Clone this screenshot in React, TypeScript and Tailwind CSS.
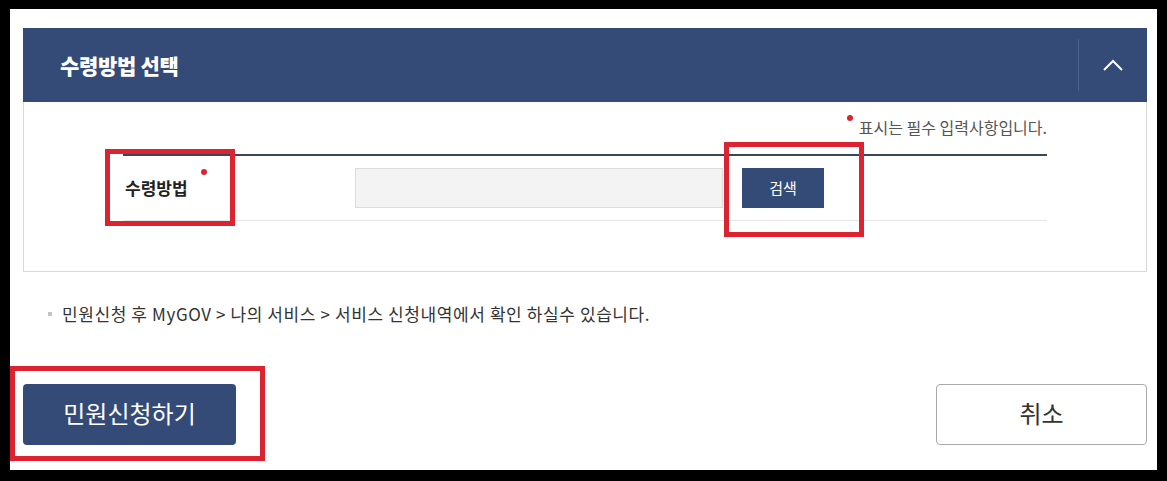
import React from "react";

const font = { fontFamily: '"Noto Sans CJK KR", "Noto Sans", sans-serif' };

export default function App() {
  return (
    <div
      className="w-[1167px] h-[481px] bg-black pt-[9px] pl-[10px] pr-[10px] pb-[11px]"
      style={font}
    >
      <div className="relative h-full bg-white pl-[13px] pr-[10px] pt-[19px]">
        {/* Header */}
        <div className="flex h-[74px] items-center bg-[#344b77]">
          <h2 className="pl-[37px] text-[21px] font-extrabold leading-none tracking-[-0.3px] text-white">
            수령방법 선택
          </h2>
          <div className="ml-auto h-[52px] w-px bg-[#4a6190]" />
          <div className="flex w-[68px] items-center justify-center">
            <svg width="20" height="12" viewBox="0 0 20 12" fill="none">
              <path d="M1 11 L10 2 L19 11" stroke="white" strokeWidth="2" />
            </svg>
          </div>
        </div>

        {/* Body */}
        <div className="h-[170px] border border-t-0 border-[#d9d9d9] px-[99px] pt-[15px]">
          <div className="flex h-[20px] items-start justify-end">
            <span className="mt-[-2px] mr-[6px] h-[6px] w-[6px] rounded-full bg-[#d9262c]" />
            <span className="text-[16px] leading-[20px] text-[#555]">
              표시는 필수 입력사항입니다.
            </span>
          </div>
          <div className="mt-[17px] flex h-[67px] items-center border-t-2 border-b border-t-[#3b4656] border-b-[#e6e6e6] pl-[2px]">
            <div className="relative w-[230px]">
              <span className="text-[17px] font-bold leading-none text-[#222]">
                수령방법
              </span>
              <span className="absolute left-[76px] top-[-7px] h-[6px] w-[6px] rounded-full bg-[#d9262c]" />
            </div>
            <div className="h-[40px] w-[368px] border border-[#dcdcdc] bg-[#f3f3f3]" />
            <button className="ml-[19px] h-[40px] w-[82px] bg-[#344b77] text-[15px] text-white">
              검색
            </button>
          </div>
        </div>

        {/* Note */}
        <div className="mt-[30px] flex items-center pl-[25px]">
          <span className="h-[4px] w-[4px] bg-[#c4c4c4]" />
          <p className="ml-[10px] text-[17px] leading-[24px] tracking-[0.6px] text-[#333]">
            민원신청 후 MyGOV &gt; 나의 서비스 &gt; 서비스 신청내역에서 확인 하실수 있습니다.
          </p>
        </div>

        {/* Buttons */}
        <div className="mt-[58px] flex justify-between">
          <button className="h-[61px] w-[213px] rounded-[4px] bg-[#344b77] pb-[3px] text-[24px] text-white">
            민원신청하기
          </button>
          <button className="h-[61px] w-[211px] rounded-[4px] border border-[#aaaaaa] bg-white pb-[3px] text-[24px] text-[#333]">
            취소
          </button>
        </div>

        {/* Red annotation boxes */}
        <div className="pointer-events-none absolute left-[95px] top-[140px] h-[77px] w-[130px] border-[5px] border-[#dc2430]" />
        <div className="pointer-events-none absolute left-[714px] top-[133px] h-[95px] w-[140px] border-[5px] border-[#dc2430]" />
        <div className="pointer-events-none absolute left-0 top-[357px] h-[95px] w-[255px] border-[5px] border-[#dc2430]" />
      </div>
    </div>
  );
}
